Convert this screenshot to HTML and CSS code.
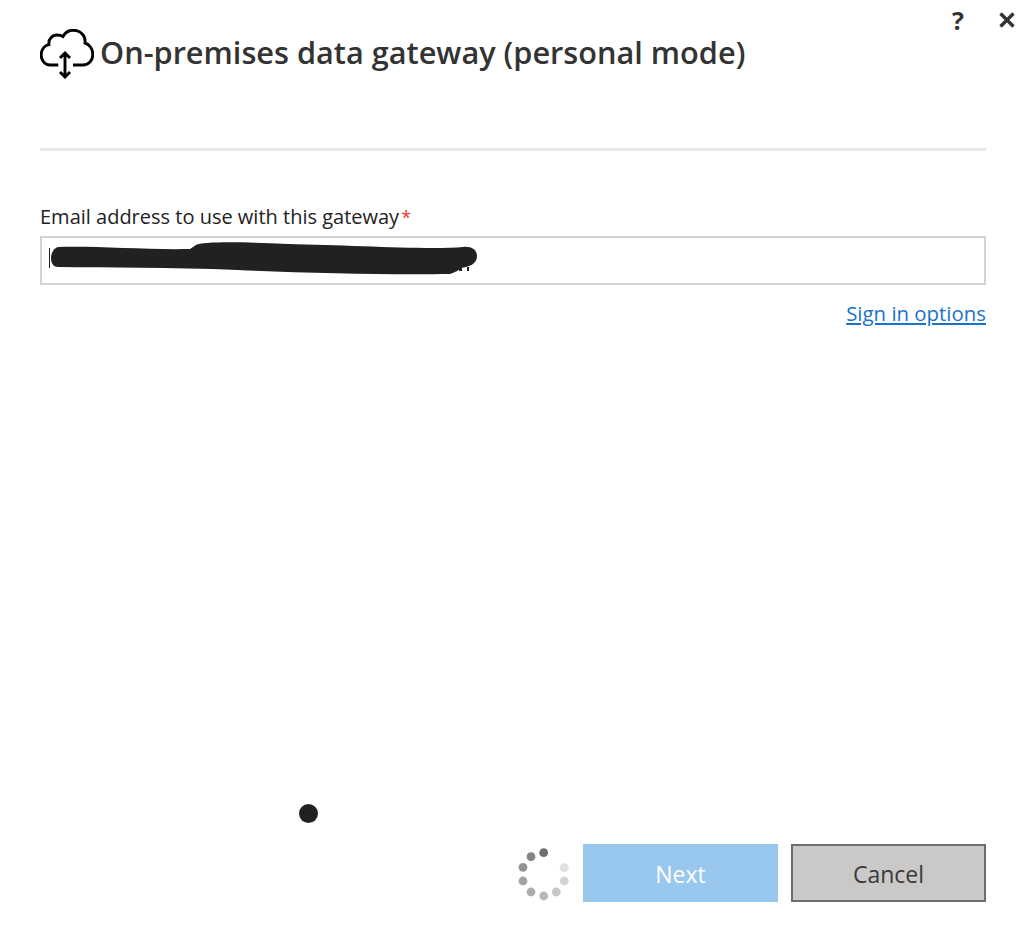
FILE: index.html
```html
<!DOCTYPE html>
<html lang="en">
<head>
  <meta charset="UTF-8" />
  <meta name="viewport" content="width=device-width, initial-scale=1.0"/>
  <title>On-premises data gateway</title>
  <link rel="stylesheet" href="styles.css">
</head>
<body>
<div class="dialog">
  <div class="window-btns">
    <span class="help">?</span>
    <svg class="close" viewBox="0 0 16 16" width="16" height="16" aria-label="Close">
      <path d="M1.5 1.5 L14.5 14.5 M14.5 1.5 L1.5 14.5" />
    </svg>
  </div>

  <div class="header">
    <svg class="cloud" viewBox="0 0 54 50" width="54" height="50">
      <path d="M18.3 36 H10 C4.5 36 1.2 31 1.2 26 C1.2 20.5 4.5 16.5 9 15.5 C8 10 12.5 6 17 6 C19.5 6 21.5 6.5 23 7.5 C25 3.5 29 1.2 33.5 1.2 C40.5 1.2 46 7 45 14 C49.5 15.5 52.8 20 52.8 25.5 C52.8 31.5 48.5 36 43 36 H33" />
      <path d="M25 24 V48 M20 29 L25 24 L30 29 M20 43 L25 48 L30 43" />
    </svg>
    <h1>On-premises data gateway (personal mode)</h1>
  </div>

  <hr class="rule" />

  <label class="field-label" for="email">Email address to use with this gateway<span class="req">*</span></label>
  <div class="input-wrap">
    <input id="email" type="text" />
    <!-- scribbled out address -->
    <svg class="scribble" viewBox="0 0 430 36" width="430" height="36">
      <path d="M1 7 H2 V27 H1 Z" />
      <path d="M10 6 C6 7 3 12 3 17 C3 23 6 26 10 26 C60 27 120 26 190 29 C260 32 340 34 402 33 C408 31 411 29 413 27 C421 26 429 23 429 15 C429 8 422 5 415 6 C380 9 300 4 240 3 C200 1 155 0 148 4 L142 8 C100 9 50 5 10 6 Z" />
      <path d="M411 27 H414 V30 H411 Z M419 26 H421 V30 H419 Z" />
    </svg>
  </div>

  <div class="link-row"><a href="#">Sign in options</a></div>

  <div class="spacer"></div>

  <div class="footer">
    <svg class="spinner" viewBox="0 0 50 50" width="50" height="50">
      <circle cx="24.7" cy="4.7" r="4.4" fill="#6f6f6f" />
      <circle cx="12" cy="8.7" r="4.4" fill="#858585" />
      <circle cx="4" cy="19.3" r="4.4" fill="#929292" />
      <circle cx="4" cy="33" r="4.4" fill="#a3a3a3" />
      <circle cx="12" cy="44" r="4.4" fill="#adadad" />
      <circle cx="24.7" cy="48" r="4.4" fill="#b8b8b8" />
      <circle cx="37.3" cy="44" r="4.4" fill="#c6c6c6" />
      <circle cx="45.3" cy="33" r="4.4" fill="#d2d2d2" />
      <circle cx="45.3" cy="19.7" r="4.4" fill="#e0e0e0" />
    </svg>
    <button class="btn btn-next" type="button">Next</button>
    <button class="btn btn-cancel" type="button">Cancel</button>
  </div>

  <div class="cursor-dot"></div>
</div>
</body>
</html>
```

FILE: styles.css
```css
* {
  box-sizing: border-box;
}
body {
  margin: 0;
  background: #fff;
  font-family: "Open Sans", "Noto Sans", sans-serif;
  color: #222;
}
.dialog {
  position: relative;
  display: flex;
  flex-direction: column;
  width: 1024px;
  height: 944px;
  padding: 29px 38px 42px 40px;
}
.window-btns {
  position: absolute;
  top: 5px;
  right: 9px;
  display: flex;
  align-items: center;
  gap: 35px;
}
.help {
  font-size: 25px;
  font-weight: 700;
  line-height: 30px;
  color: #333;
}
.close {
  fill: none;
  stroke: #333;
  stroke-width: 3.4;
}
.header {
  display: flex;
  align-items: flex-start;
  gap: 6px;
  height: 50px;
}
.cloud {
  flex: none;
  fill: none;
  stroke: #000;
  stroke-width: 2.9;
}
.header h1 {
  margin: 0;
  font-size: 30.7px;
  font-weight: 600;
  line-height: 47px;
  color: #333;
  white-space: nowrap;
}
.rule {
  width: 100%;
  height: 3px;
  margin: 69px 0 0;
  border: 0;
  background: #e9e9e9;
}
.field-label {
  margin-top: 53px;
  font-size: 20px;
  line-height: 26px;
  color: #222;
}
.req {
  margin-left: 2px;
  font-size: 18px;
  color: #f03a3a;
}
.input-wrap {
  position: relative;
  margin-top: 6px;
}
.input-wrap input {
  display: block;
  width: 100%;
  height: 49px;
  border: 2px solid #d2d2d2;
  background: #fff;
  outline: none;
}
.scribble {
  position: absolute;
  top: 5px;
  left: 8px;
  fill: #212121;
}
.link-row {
  margin-top: 14px;
  text-align: right;
  font-size: 20.4px;
  line-height: 28px;
}
.link-row a {
  color: #1a73c9;
}
.spacer {
  flex: 1;
}
.footer {
  display: flex;
  align-items: center;
  justify-content: flex-end;
}
.spinner {
  margin-right: 14px;
  overflow: visible;
}
.btn {
  width: 195px;
  height: 58px;
  padding: 2px 0 0;
  font-family: inherit;
  font-size: 23px;
  border: 0;
}
.btn-next {
  background: #99c8ef;
  color: #fff;
  margin-right: 13px;
}
.btn-cancel {
  background: #cbc9c7;
  border: 2px solid #6f6d6b;
  color: #3a3a3a;
}
.cursor-dot {
  position: absolute;
  left: 299px;
  top: 804px;
  width: 19px;
  height: 19px;
  border-radius: 50%;
  background: #212121;
}
```
